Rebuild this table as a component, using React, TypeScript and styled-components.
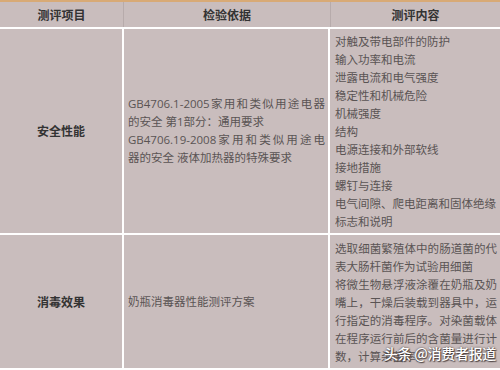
import styled, { createGlobalStyle } from "styled-components"

const GlobalStyle = createGlobalStyle`
    html, body{
        margin: 0;
        padding: 0;
        background: #c9bdbd;
    }
`

const Frame = styled.div`
    position: relative;
    width: 500px;
    height: 370px;
    overflow: hidden;
    background: #c9bdbd;
    border-top: 2px solid #d8aa76;
    box-sizing: border-box;
    font-family: "Open Sans", "Noto Sans CJK SC", sans-serif;
`

const HeadRow = styled.div`
    display: grid;
    grid-template-columns: 123px 207px 1fr;
    height: 25px;
    border-bottom: 2px solid #ffffff;
`

const HeadCell = styled.div<{ $first?: boolean }>`
    display: flex;
    align-items: center;
    justify-content: center;
    border-left: ${p => (p.$first ? "none" : "1px solid #b7abab")};
    font-family: "Noto Sans CJK SC", sans-serif;
    font-weight: 700;
    font-size: 12px;
    color: #333333;
`

const BodyRow = styled.div<{ $height: number }>`
    display: grid;
    grid-template-columns: 122px 204px 1fr;
    column-gap: 2px;
    height: ${p => p.$height}px;
    background: #ffffff;
    border-bottom: 2px solid #ffffff;
`

const Cell = styled.div`
    display: flex;
    flex-direction: column;
    justify-content: center;
    background: #c9bdbd;
    font-size: 11.5px;
    line-height: 18px;
    color: #5a5454;
`

const ItemCell = styled(Cell)`
    align-items: center;
    font-family: "Noto Sans CJK SC", sans-serif;
    font-weight: 700;
    font-size: 12px;
    color: #333333;
`

const BasisCell = styled(Cell)`
    padding: 0 3px 0 4px;
`

const ContentCell = styled(Cell)`
    padding: 3px 3px 3px 5px;
    text-align: justify;
    font-family: "Noto Sans CJK SC", sans-serif;
`

const Line = styled.span<{ $fill?: boolean }>`
    display: block;
    white-space: nowrap;
    text-align: ${p => (p.$fill ? "justify" : "left")};
    text-align-last: ${p => (p.$fill ? "justify" : "left")};
`

const Watermark = styled.div`
    position: absolute;
    left: 384px;
    top: 341px;
    font-family: "Noto Sans CJK SC", sans-serif;
    font-size: 14px;
    font-weight: 500;
    color: #ffffff;
    letter-spacing: -0.3px;
    text-shadow: 0 0 2px rgba(40, 30, 30, 0.9), 1px 1px 1px rgba(40, 30, 30, 0.7);
`

const safetyItems = [
    "对触及带电部件的防护",
    "输入功率和电流",
    "泄露电流和电气强度",
    "稳定性和机械危险",
    "机械强度",
    "结构",
    "电源连接和外部软线",
    "接地措施",
    "螺钉与连接",
    "电气间隙、爬电距离和固体绝缘",
    "标志和说明",
]

export default function App(){
    return(
        <>
            <GlobalStyle />
            <Frame>
                <HeadRow>
                    <HeadCell $first>测评项目</HeadCell>
                    <HeadCell>检验依据</HeadCell>
                    <HeadCell>测评内容</HeadCell>
                </HeadRow>
                <BodyRow $height={204}>
                    <ItemCell>安全性能</ItemCell>
                    <BasisCell>
                        <Line $fill>GB4706.1-2005家用和类似用途电器</Line>
                        <Line>的安全 第1部分：通用要求</Line>
                        <Line $fill>GB4706.19-2008家用和类似用途电</Line>
                        <Line>器的安全 液体加热器的特殊要求</Line>
                    </BasisCell>
                    <ContentCell>
                        {safetyItems.map(item=>(
                            <Line key={item}>{item}</Line>
                        ))}
                    </ContentCell>
                </BodyRow>
                <BodyRow $height={133}>
                    <ItemCell>消毒效果</ItemCell>
                    <BasisCell>
                        <Line>奶瓶消毒器性能测评方案</Line>
                    </BasisCell>
                    <ContentCell>
                        <div>选取细菌繁殖体中的肠道菌的代表大肠杆菌作为试验用细菌</div>
                        <div>将微生物悬浮液涂覆在奶瓶及奶嘴上，干燥后装载到器具中，运行指定的消毒程序。对染菌载体在程序运行前后的含菌量进行计数，计算杀菌率。</div>
                    </ContentCell>
                </BodyRow>
                <Watermark>头条 @消费者报道</Watermark>
            </Frame>
        </>
    )
}
